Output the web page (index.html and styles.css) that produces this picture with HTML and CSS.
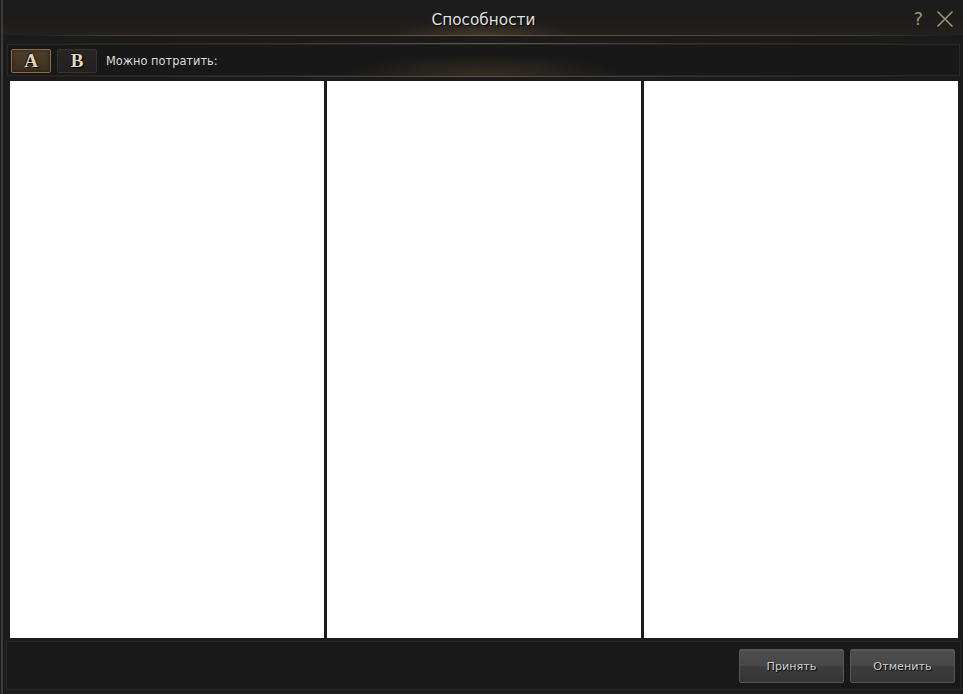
FILE: index.html
```html
<!DOCTYPE html>
<html lang="ru">
<head>
<meta charset="utf-8">
<title>Способности</title>
<link rel="stylesheet" href="styles.css">
</head>
<body>
<div class="window">
  <header class="titlebar">
    <div class="title">Способности</div>
    <div class="title-icons">
      <span class="help">?</span>
      <svg class="close" width="18" height="18" viewBox="0 0 18 18"><path d="M1.5 1.5 L16.5 16.5 M16.5 1.5 L1.5 16.5" stroke="#a3957c" stroke-width="1.5" fill="none"/></svg>
    </div>
  </header>
  <div class="content">
    <div class="toolbar">
      <button class="set-btn active">A</button>
      <button class="set-btn">B</button>
      <span class="points">Можно потратить:</span>
    </div>
    <div class="panels">
      <div class="panel"></div>
      <div class="panel"></div>
      <div class="panel"></div>
    </div>
    <div class="footer">
      <button class="action-btn">Принять</button>
      <button class="action-btn">Отменить</button>
    </div>
  </div>
</div>
</body>
</html>
```

FILE: styles.css
```css
html, body {
  margin: 0;
  padding: 0;
}
body {
  width: 963px;
  height: 694px;
  overflow: hidden;
  background: #1b1b1b;
  font-family: "DejaVu Sans", "Liberation Sans", sans-serif;
}
.window {
  height: 694px;
  margin-left: 1px;
  border-left: 2px solid #3d3c3b;
  display: flex;
  flex-direction: column;
  box-sizing: border-box;
}
.titlebar {
  height: 36px;
  box-sizing: border-box;
  position: relative;
  display: flex;
  align-items: center;
  justify-content: center;
  background:
    radial-gradient(ellipse 90px 14px at 50% 100%, rgba(120, 95, 70, 0.35), rgba(0,0,0,0) 100%),
    linear-gradient(to bottom, #1c1c1c 0%, #1d1c1b 55%, #25211c 100%);
  border-bottom: 1px solid transparent;
  border-image: linear-gradient(90deg, rgba(0,0,0,0) 2%, #4a3f33 12%, #6a5946 50%, #4a3f33 88%, rgba(0,0,0,0) 99%) 1;
}
.title {
  color: #e0e0e0;
  font-size: 15.3px;
  text-shadow: 1px 1px 1px #000;
  margin-left: 1px;
  padding-top: 4px;
}
.title-icons {
  position: absolute;
  right: 9px;
  top: 9px;
  display: flex;
  align-items: center;
  gap: 13px;
}
.help {
  color: #9c8e74;
  font-size: 18px;
  line-height: 18px;
  margin-top: 1px;
}
.close {
  display: block;
}
.content {
  flex: 1;
  display: flex;
  flex-direction: column;
  padding: 7px 2px 4px 3px;
}
.toolbar {
  height: 34px;
  box-sizing: border-box;
  border: 1px solid #0e0e0e;
  box-shadow: inset 0 0 0 1px #292827;
  background:
    radial-gradient(ellipse 140px 22px at 50% 100%, rgba(110, 85, 60, 0.35), rgba(0,0,0,0) 100%),
    #181818;
  border-bottom: 1px solid transparent;
  border-image: linear-gradient(90deg, #1e1c1a 0%, #3d3429 30%, #6a5844 50%, #3d3429 70%, #1e1c1a 100%) 1;
  display: flex;
  align-items: flex-start;
  padding: 5px 0 0 4px;
}
.set-btn {
  width: 40px;
  height: 24px;
  margin: 0 6px 0 0;
  padding: 0;
  box-sizing: border-box;
  border: 1px solid #37332f;
  border-radius: 2px;
  background: linear-gradient(to bottom, #282624, #222120);
  color: #e2d6bd;
  font-family: "Liberation Serif", "DejaVu Serif", serif;
  font-weight: bold;
  font-size: 19px;
  line-height: 22px;
  text-shadow: 1px 1px 1px #000, -1px -1px 0 rgba(0,0,0,0.6);
}
.set-btn.active {
  border-color: #8b6d45;
  background: linear-gradient(to bottom, #4e3f2d, #3d3122);
  box-shadow: inset 0 0 4px rgba(0,0,0,0.5);
}
.points {
  color: #dcdcdc;
  font-size: 11.4px;
  margin-left: 3px;
  line-height: 24px;
}
.panels {
  margin-top: 4px;
  height: 557px;
  display: flex;
  gap: 3px;
  padding-left: 4px;
}
.panel {
  width: 314px;
  height: 557px;
  background: #ffffff;
}
.footer {
  margin-top: 3px;
  height: 49px;
  width: 955px;
  box-sizing: border-box;
  border: 1px solid #2a2a29;
  background: #191919;
  display: flex;
  justify-content: flex-end;
  align-items: flex-start;
  gap: 6px;
  padding: 7px 5px 0 0;
}
.action-btn {
  width: 105px;
  height: 34px;
  box-sizing: border-box;
  border: 1px solid #5e5547;
  border-radius: 2px;
  background: linear-gradient(to bottom, #4d4d4d 0%, #474747 48%, #3c3c3c 52%, #353535 100%);
  color: #cfcfcf;
  font-family: "DejaVu Sans", sans-serif;
  font-size: 11.2px;
  padding: 1px 0 0;
  text-shadow: 1px 1px 1px #000;
  box-shadow: inset 0 1px 0 rgba(255,255,255,0.08);
}
```
